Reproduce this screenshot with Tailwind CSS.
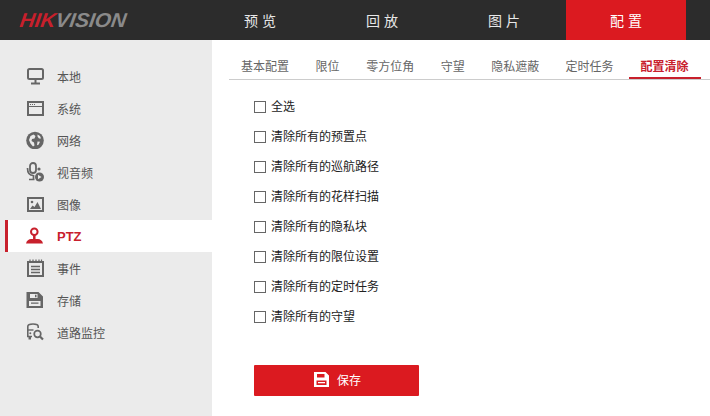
<!doctype html>
<html lang="zh">
<head>
    <meta charset="utf-8">
    <title>配置</title>
    <script src="https://cdn.jsdelivr.net/npm/@tailwindcss/browser@4"></script>
</head>
<body class="w-[710px] h-[416px] overflow-hidden bg-white font-['Noto_Sans_CJK_SC','Liberation_Sans',sans-serif]">

<header class="h-10 bg-[#2c2c2c] flex">
    <div class="w-[200px] pl-[20px] flex items-center">
        <span class="font-['Liberation_Sans',sans-serif] italic font-bold text-[20px] leading-none scale-x-[1.04] -skew-x-[8deg] origin-left"><span class="text-[#c8202c]">HIK</span><span class="text-[#8a8a8a]">VISION</span></span>
    </div>
    <nav class="flex gap-[2px] text-sm text-white">
        <a class="w-[120px] pl-1 flex items-center justify-center tracking-[4px] text-[#e8e8e8]">预览</a>
        <a class="w-[120px] pl-1 flex items-center justify-center tracking-[4px] text-[#e8e8e8]">回放</a>
        <a class="w-[120px] pl-1 flex items-center justify-center tracking-[4px] text-[#e8e8e8]">图片</a>
        <a class="w-[120px] pl-1 flex items-center justify-center tracking-[4px] bg-[#db1a20]">配置</a>
    </nav>
</header>

<div class="flex h-[376px]">
    <aside class="w-[212px] bg-[#ebebeb] pt-[20px] pl-[5px] text-xs text-[#555]">
        <div class="h-8 flex items-center pl-[21px] gap-[13px] leading-none">
            <svg class="w-[18px] h-[18px]" viewBox="0 0 18 18" fill="none"><rect x="2" y="2" width="15" height="10" rx="1.500" stroke="#666" stroke-width="2"/><path d="M9.500 13v3" stroke="#666" stroke-width="2"/><path d="M5 16.500h9" stroke="#666" stroke-width="2"/></svg>
            <span class="mt-0.5">本地</span>
        </div>
        <div class="h-8 flex items-center pl-[21px] gap-[13px] leading-none">
            <svg class="w-[18px] h-[18px]" viewBox="0 0 18 18" fill="none"><rect x="2" y="3" width="15" height="13" stroke="#666" stroke-width="2"/><path d="M2 7.500h15" stroke="#666"/><path d="M4 5.500h1M6 5.500h1M8 5.500h1" stroke="#666"/></svg>
            <span class="mt-0.5">系统</span>
        </div>
        <div class="h-8 flex items-center pl-[21px] gap-[13px] leading-none">
            <svg class="w-[18px] h-[18px]" viewBox="0 0 18 18"><circle cx="9" cy="9.500" r="8.800" fill="#666"/><path d="M4.500 5l3-1.500 2 1.500-1 2.500-2.500.5-.5 2 2.500 1.500.5 3-1.500 1-2.500-3-1.500-3.500zM11.500 3.500l2.500 1.500 1 2.500-2 0-1.500-2zM11.500 10.500l2.500.2-1.500 3-1.500.5z" fill="#ebebeb"/></svg>
            <span class="mt-0.5">网络</span>
        </div>
        <div class="h-8 flex items-center pl-[21px] gap-[13px] leading-none">
            <svg class="w-[18px] h-5" viewBox="0 0 18 20" fill="none"><rect x="4" y="1" width="6" height="10" rx="3" stroke="#666" stroke-width="1.800"/><path d="M1.500 6c0 5 2 7.500 6 7.500" stroke="#666" stroke-width="1.700"/><path d="M3 17.500h5.500M7.500 13v4.500" stroke="#666" stroke-width="1.700"/><circle cx="13" cy="7" r="1.600" fill="#666"/><circle cx="13.500" cy="15" r="4.500" fill="#666"/><path d="M12 12.800v4.400l3.500-2.200z" fill="#ebebeb"/></svg>
            <span class="mt-0.5">视音频</span>
        </div>
        <div class="h-8 flex items-center pl-[21px] gap-[13px] leading-none">
            <svg class="w-[18px] h-[18px]" viewBox="0 0 18 18" fill="none"><rect x="2" y="3" width="15" height="13" stroke="#666" stroke-width="2"/><circle cx="6" cy="7" r="1.300" fill="#666"/><path d="M4 14l2.500-3.500 2 1.500 3-5 3.500 7z" fill="#666"/></svg>
            <span class="mt-0.5">图像</span>
        </div>
        <div class="h-8 flex items-center pl-[21px] gap-[13px] leading-none bg-white border-l-[3px] border-[#c8202c] text-[#c8202c] font-bold">
            <svg class="w-[18px] h-[18px] -ml-[3px]" viewBox="0 0 18 18" fill="none"><circle cx="8.300" cy="4.800" r="3.300" stroke="#c8202c" stroke-width="2"/><path d="M8.300 8v4" stroke="#c8202c" stroke-width="2.500"/><path d="M0 16.500c.5-3 3-4.500 5-4.500h7c2 0 4.500 1.500 5 4.500z" fill="#c8202c"/></svg>
            <span class="font-['Liberation_Sans',sans-serif] text-[13px]">PTZ</span>
        </div>
        <div class="h-8 flex items-center pl-[21px] gap-[13px] leading-none">
            <svg class="w-[18px] h-[18px]" viewBox="0 0 18 18" fill="none"><rect x="2" y="3" width="15" height="14" stroke="#666" stroke-width="2"/><path d="M4 0.500v3M7 0.500v3M10 0.500v3M13 0.500v3M15.500 0.500v3" stroke="#666" stroke-width="1.200"/><path d="M5 7.500h9M5 10.500h9M5 13.500h9" stroke="#666" stroke-width="1.400"/></svg>
            <span class="mt-0.5">事件</span>
        </div>
        <div class="h-8 flex items-center pl-[21px] gap-[13px] leading-none">
            <svg class="w-[18px] h-[18px]" viewBox="0 0 18 18" fill="none"><path fill="#666" fill-rule="evenodd" d="M0.500 1h12L17 5.500V17H0.500zM4 3v4h7.500V3zM9 3.700h1.500v2.600H9zM3 10v5h11.500v-5zM5 11.500h7.500v1.200H5z"/></svg>
            <span class="mt-0.5">存储</span>
        </div>
        <div class="h-8 flex items-center pl-[21px] gap-[13px] leading-none">
            <svg class="w-[18px] h-[18px]" viewBox="0 0 18 18" fill="none"><path d="M6 13.500H1.800V3.500C1.800 1.800 3.500 1 7 1s5.200.8 5.200 2.500V5" stroke="#666" stroke-width="1.600"/><path d="M2 7h5.500" stroke="#666" stroke-width="1.400"/><circle cx="4.300" cy="10.300" r="1" fill="#666"/><path d="M2.500 14v2.500h2.500V14z" fill="#666"/><circle cx="11.500" cy="11" r="3.300" stroke="#666" stroke-width="1.700"/><path d="M14 13.500l3 3" stroke="#666" stroke-width="2.200"/></svg>
            <span class="mt-0.5">道路监控</span>
        </div>
    </aside>

    <main class="flex-1 pl-[17px] pt-[13px]">
        <div class="flex gap-[2.6px] h-[27px] border-b border-[#ccc] text-xs text-[#666]">
            <a class="w-[72px] h-[26px] text-center leading-[26px]">基本配置</a>
            <a class="w-12 h-[26px] text-center leading-[26px]">限位</a>
            <a class="w-[72px] h-[26px] text-center leading-[26px]">零方位角</a>
            <a class="w-12 h-[26px] text-center leading-[26px]">守望</a>
            <a class="w-[72px] h-[26px] text-center leading-[26px]">隐私遮蔽</a>
            <a class="w-[72px] h-[26px] text-center leading-[26px] -translate-x-[0.5px]">定时任务</a>
            <a class="w-[72px] h-[26px] text-center leading-[26px] border-b-2 border-[#c8202c] text-[#c8202c] font-bold">配置清除</a>
        </div>

        <div class="pl-[25px] pt-[11px] text-xs text-[#222]">
            <label class="h-[30px] flex items-center gap-[5px]"><span class="w-3 h-3 border border-[#666] bg-white mt-px"></span><span class="mb-px">全选</span></label>
            <label class="h-[30px] flex items-center gap-[5px]"><span class="w-3 h-3 border border-[#666] bg-white mt-px"></span><span class="mb-px">清除所有的预置点</span></label>
            <label class="h-[30px] flex items-center gap-[5px]"><span class="w-3 h-3 border border-[#666] bg-white mt-px"></span><span class="mb-px">清除所有的巡航路径</span></label>
            <label class="h-[30px] flex items-center gap-[5px]"><span class="w-3 h-3 border border-[#666] bg-white mt-px"></span><span class="mb-px">清除所有的花样扫描</span></label>
            <label class="h-[30px] flex items-center gap-[5px]"><span class="w-3 h-3 border border-[#666] bg-white mt-px"></span><span class="mb-px">清除所有的隐私块</span></label>
            <label class="h-[30px] flex items-center gap-[5px]"><span class="w-3 h-3 border border-[#666] bg-white mt-px"></span><span class="mb-px">清除所有的限位设置</span></label>
            <label class="h-[30px] flex items-center gap-[5px]"><span class="w-3 h-3 border border-[#666] bg-white mt-px"></span><span class="mb-px">清除所有的定时任务</span></label>
            <label class="h-[30px] flex items-center gap-[5px]"><span class="w-3 h-3 border border-[#666] bg-white mt-px"></span><span class="mb-px">清除所有的守望</span></label>

            <button type="button" class="mt-[34px] w-[165px] h-[31px] pb-0.5 pl-0.5 rounded-[1px] bg-[#db1a20] text-white text-xs flex items-center justify-center gap-[8px]">
                <svg class="w-[15px] h-[15px]" viewBox="0 0 15 15"><path fill="#fff" fill-rule="evenodd" d="M0 0h11.500L15 3.500V15H0zM3 2v3.500h7.500V2zM2.500 8.500V13h10V8.500zM4 10h7v1.200H4z"/></svg>
                保存
            </button>
        </div>
    </main>
</div>

</body>
</html>
